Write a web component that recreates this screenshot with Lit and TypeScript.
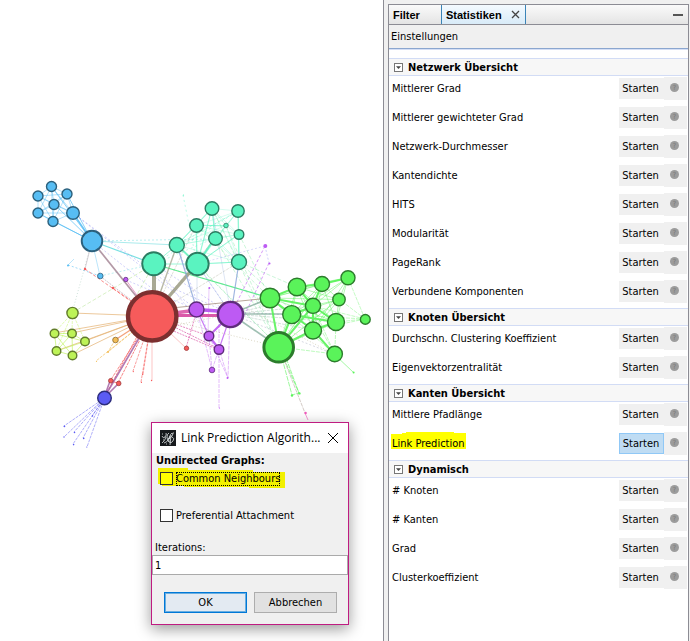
import { LitElement, html, svg, css } from "lit";
import { customElement } from "lit/decorators.js";
import { classMap } from "lit/directives/class-map.js";

type Pt = [number, number, number];

interface Group {
  fill: string;
  stroke: string;
  nodes: Pt[];
}

const groups: Record<string, Group> = {
  sky: {
    fill: "#57bdf3", stroke: "#2c607c",
    nodes: [[38, 196, 5], [51.5, 186.5, 5], [67, 194, 5], [54, 204.5, 5], [38, 213, 5], [53, 221.5, 5],
      [73, 213, 6.3], [92, 241, 10.3], [100.3, 276, 2.8], [68, 265.5, 1]],
  },
  teal: {
    fill: "#5af3c0", stroke: "#2c7c62",
    nodes: [[153.7, 263.7, 11.5], [176.8, 245, 7.5], [197.5, 264, 11.2], [196.5, 225.5, 6.8], [212, 208.5, 6.8],
      [238, 211, 6.2], [226, 225.5, 2.3], [239, 234.5, 4.8], [215.5, 238.5, 6.8], [239, 262, 7.5], [183.5, 195, 0.6]],
  },
  lime: {
    fill: "#bdf357", stroke: "#627c2c",
    nodes: [[72.5, 313, 5.6], [54.5, 333.5, 4.3], [72, 333.5, 4.3], [85, 341.5, 4.3], [56.5, 351, 4.3], [72.5, 355.5, 4.3]],
  },
  orange: {
    fill: "#f3bd57", stroke: "#8c6a2c",
    nodes: [[115.5, 340, 2.8], [108, 352, 1], [96.5, 361.5, 0.6]],
  },
  violet: {
    fill: "#bd5af3", stroke: "#5f2c7c",
    nodes: [[196.5, 309.5, 7.5], [230.5, 314.5, 12.6], [209, 336, 4.8], [219, 349.5, 4.8], [212, 370, 2.8],
      [227.5, 378, 1], [219.5, 408, 0.6], [265.3, 246, 2], [269.5, 263.5, 1], [209.3, 288, 1], [125.8, 279.5, 2.2]],
  },
  red: {
    fill: "#f65b5b", stroke: "#a03c3c",
    nodes: [[186.5, 348.3, 2.2], [85, 269, 1.2], [113, 288, 1.2], [110.8, 380.7, 2.3], [118.7, 383.4, 2.3],
      [133.3, 371.6, 0.7], [142.7, 374.4, 0.7], [141.4, 382.4, 0.6], [151.6, 380.5, 0.7]],
  },
  indigo: {
    fill: "#5b5bf3", stroke: "#2c2c7c",
    nodes: [[104.5, 398, 6.8], [64.4, 426.3, 0.9], [64, 437, 0.7], [74.5, 432.5, 0.8], [73.6, 444.6, 0.8],
      [83.7, 438.4, 0.8], [86.8, 447, 0.6], [92.5, 416, 0.8]],
  },
  green: {
    fill: "#5af35a", stroke: "#2c7c2c",
    nodes: [[270, 298, 9.8], [297, 287, 8.8], [322, 284, 7.5], [348, 277.7, 7], [339, 299.5, 6.2], [313, 305.8, 7.6],
      [291.7, 314.6, 9], [336, 322, 8.5], [313, 330.5, 8.5], [365.3, 319.4, 4.9], [278.7, 347.3, 14.8], [334.7, 354, 7.7],
      [353.6, 372.4, 1], [292, 395.5, 1.2], [299.4, 393.4, 1.2]],
  },
  pink: { fill: "#f35abd", stroke: "#b8408c", nodes: [[305.6, 413, 1.2]] },
};

/* stroke colour, width, opacity, dash pattern, path */
type Edge = [string, number, number, string, string];

const mesh = (name: string, from: number, to: number): string => {
  const ns = groups[name].nodes.slice(from, to);
  let d = "";
  ns.forEach((a, i) => ns.slice(i + 1).forEach((b) => {
    d += `M${a[0]} ${a[1]}L${b[0]} ${b[1]}`;
  }));
  return d;
};

const star = (x: number, y: number, ends: number[][]): string =>
  ends.map(([ex, ey]) => `M${x} ${y}L${ex} ${ey}`).join("");

const edges: Edge[] = [
  ["#57bdf3", 0.9, 0.5, "", mesh("sky", 0, 7)],
  ["#57bdf3", 1, 0.7, "", star(92, 241, [[53, 221], [73, 213], [54, 204], [67, 194], [51, 186], [38, 213]])],
  ["#57bdf3", 1.6, 0.7, "", "M92 241L73 213"],
  ["#57bdf3", 0.8, 0.5, "", "M92 241L100 276M68 265L74 259"],
  ["#57bdf3", 0.8, 0.7, "2 2", "M68 265L100 276"],
  ["#57d8da", 1.2, 0.8, "", "M92 241L154 264"],
  ["#57d8da", 1, 0.5, "", "M92 241L177 245"],
  ["#57d8da", 0.8, 0.5, "2 2", "M92 241L215 239M100 276L154 264"],
  ["#8a8af3", 0.8, 0.5, "2 2", "M73 213L197 310M73 213L177 290L231 314M92 241L154 290M177 245L209 336M126 280L197 310M197 264L231 314M154 264L231 314"],
  ["#8ab8a4", 0.8, 0.5, "1 2", "M92 241L72 313"],
  ["#9a8a9a", 0.8, 0.5, "", "M92 241L85 269"],
  ["#f65b5b", 0.9, 0.8, "3 2", "M85 269L152 316M113 288L152 316"],
  ["#9a8a9a", 0.8, 0.6, "2 1", "M100 276L152 316"],
  ["#a08090", 1.7, 0.8, "", "M92 241L152 316"],
  ["#d860a8", 1, 0.6, "", "M126 280L152 316"],
  ["#a8e080", 0.9, 0.5, "4 2", "M72 313L154 264M154 264L125 316"],
  ["#5af3c0", 0.8, 0.32, "", mesh("teal", 1, 10)],
  ["#5af3c0", 1, 0.6, "", "M154 264L177 245M154 264L197 264L239 262M197 264L196 225L212 208L215 238ZM177 245L196 225L226 226M197 264L239 234M212 208L197 264M238 211L239 262"],
  ["#5af3c0", 2, 0.8, "", "M177 245L197 264L215 238"],
  ["#5af3c0", 0.8, 0.5, "2 3", "M183 195L197 264M154 264L238 211M154 264L215 238M238 211L177 245M154 264L270 298"],
  ["#80e8a0", 0.8, 0.5, "4 2", "M197 264L279 347M239 234L270 298M215 238L279 347M239 262L297 287M212 208L279 347M226 226L279 347M177 245L279 347M239 262L313 330M196 225L270 298"],
  ["#5ae88a", 1.3, 0.95, "", "M154 264L270 298"],
  ["#a0a088", 4, 0.9, "", "M154 264V316"],
  ["#a0a088", 3.4, 0.9, "", "M197 264L152 316"],
  ["#a0a088", 1.4, 0.75, "", "M177 245L152 316"],
  ["#a0a088", 0.8, 0.4, "3 1", "M196 225L152 316M215 238L152 316M239 262L152 316"],
  ["#88a4d8", 1.2, 0.8, "", "M239 262L231 314M177 245L197 310"],
  ["#88a4d8", 0.8, 0.35, "", "M197 264V310M197 264L231 314M212 208L231 314"],
  ["#8a8af3", 0.8, 0.4, "2 2", "M197 264L265 246M154 264L209 336"],
  ["#bd5af3", 1, 0.6, "3 2", "M265 246L231 314M269 263L240 325"],
  ["#8a8af3", 0.8, 0.5, "2 2", "M265 246L269 263"],
  ["#bd5af3", 0.8, 0.4, "", "M209 288L208 336"],
  ["#e4b070", 1, 0.7, "", star(152, 316, [[72, 313], [54, 333], [72, 333], [85, 341], [56, 351], [72, 355]])],
  ["#bdf357", 0.9, 0.7, "", mesh("lime", 1, 6)],
  ["#bdf357", 0.8, 0.55, "3 1", star(72.5, 313, [[54, 333], [72, 333], [85, 341], [56, 351]])],
  ["#f08c5a", 1.4, 0.8, "", "M152 316L115 340"],
  ["#f3bd57", 0.9, 0.7, "3 1", "M152 316L108 352M115 340L108 352M152 316L96 361"],
  ["#f65b5b", 0.9, 0.65, "3 1", "M152 316L133 371M152 316L143 374M152 316L141 382"],
  ["#f65b5b", 0.9, 0.4, "", "M152 316V380M152 316L186 348"],
  ["#f65b5b", 1, 0.75, "3 1", "M152 316L110 381M152 316L118 383M148 316L104 398"],
  ["#f65b5b", 1, 0.8, "", "M110 381L118 383"],
  ["#a05aa0", 1.6, 0.8, "", "M152 316L104 398M110 381L104 398L119 383"],
  ["#5b5bf3", 0.9, 0.55, "3 1", star(104.5, 398, [[64, 426], [64, 437], [74, 432], [73, 444], [83, 438], [87, 447], [92, 416]])],
  ["#da58a8", 3, 1, "", "M152 315.500L231 315.500"],
  ["#a89080", 1, 0.8, "", "M152 310L270 298"],
  ["#da58a8", 3.4, 0.9, "", "M152 316L197 310"],
  ["#bd5af3", 3.6, 1, "", "M197 309.500L231 312"],
  ["#da58a8", 1, 0.7, "2 1", "M152 316L209 336M152 316L219 349M152 322L219 350M197 310L186 348"],
  ["#bd5af3", 2.2, 0.9, "", "M231 314L209 336L219 349"],
  ["#bd5af3", 1.2, 0.8, "", "M197 310L209 336M231 314L219 349"],
  ["#bd5af3", 0.9, 0.45, "4 1", "M197 310L212 370M209 336L212 370L219 349L228 378L230 314M219 314V408M209 336L228 378"],
  ["#b0a880", 0.8, 0.6, "1 2", "M152 316L279 347M231 314L152 330M230 300L334 354"],
  ["#88b0a0", 1.6, 0.8, "", "M231 314L270 298M231 314H292M231 314L279 347"],
  ["#88b0a0", 0.8, 0.45, "3 1", "M231 314L297 287M231 314L313 306M231 314L336 322M231 314L313 330M231 314L270 305"],
  ["#8088a8", 0.8, 0.4, "2 2", "M231 314L334 354M197 310L292 315"],
  ["#5af35a", 0.9, 0.5, "", mesh("green", 0, 9)],
  ["#5af35a", 0.8, 0.45, "4 1", star(365, 319, [[348, 278], [313, 306], [336, 322], [292, 315], [313, 330], [339, 299]])],
  ["#5af35a", 0.8, 0.5, "4 1", star(334.7, 354, [[279, 347], [297, 287], [313, 306], [336, 322], [313, 330], [270, 298]])],
  ["#5af35a", 2, 0.9, "", "M270 298L297 287L322 284L348 278M270 298L313 306L297 287M270 298L292 315L313 306L322 284M292 315L336 322L313 330L279 347L292 315M270 298L279 347M313 306L336 322M313 330L334 354M270 298L313 330L313 306M279 347L313 306"],
  ["#5af35a", 1, 0.55, "", "M279 347L336 322M279 347L297 287M279 347L339 299M279 347L322 284M334 354L353 372"],
  ["#5af35a", 1, 0.6, "5 1", "M279 347L292 395M279 347L299 393L292 395M282 347L299 393"],
  ["#b8a8a0", 1, 0.6, "4 1", "M279 347L305 413"],
  ["#f35abd", 1, 0.6, "", "M305 413L308 420"],
];

const strokeFor = (r: number) => (r > 14 ? 3 : r > 12 ? 2.4 : r > 9.9 ? 1.9 : r > 4 ? 1.4 : r > 2 ? 0.8 : 0);

@customElement("network-graph")
export class NetworkGraph extends LitElement {
  static styles = css`
    :host { display: block; }
    svg { display: block; width: 100%; height: auto; }
  `;

  render() {
    return html`
      <svg viewBox="0 0 383 480" role="img" aria-label="Netzwerkgraph">
        ${edges.map(([c, w, o, dash, d]) => svg`
          <path d=${d} fill="none" stroke=${c} stroke-width=${w} stroke-opacity=${o} stroke-dasharray=${dash || "none"}></path>`)}
        ${Object.values(groups).map((g) => g.nodes.map(([x, y, r]) => svg`
          <circle cx=${x} cy=${y} r=${r} fill=${g.fill} stroke=${g.stroke} stroke-width=${strokeFor(r)}></circle>`))}
        <circle cx="152.2" cy="316.3" r="24.2" fill="#f65b5b" stroke="#7c2f2f" stroke-width="4.4"></circle>
      </svg>
    `;
  }
}

const sections = [
  {
    title: "Netzwerk Übersicht",
    items: ["Mittlerer Grad", "Mittlerer gewichteter Grad", "Netzwerk-Durchmesser", "Kantendichte", "HITS",
      "Modularität", "PageRank", "Verbundene Komponenten"],
  },
  { title: "Knoten Übersicht", items: ["Durchschn. Clustering Koeffizient", "Eigenvektorzentralität"] },
  { title: "Kanten Übersicht", items: ["Mittlere Pfadlänge", "Link Prediction"] },
  { title: "Dynamisch", items: ["# Knoten", "# Kanten", "Grad", "Clusterkoeffizient"] },
];

@customElement("statistics-panel")
export class StatisticsPanel extends LitElement {
  static styles = css`
    :host {
      display: flex;
      box-sizing: border-box;
      padding: 4px 1px 0 4px;
      border-left: 1px solid #8c8c94;
      background: #f0f0f0;
    }
    * { box-sizing: border-box; }
    button { font: inherit; color: inherit; border: 0; padding: 0; margin: 0; }
    .panel {
      flex: 1;
      display: flex;
      flex-direction: column;
      border: 1px solid #8c8c94;
      border-bottom: 0;
      background: #fff;
    }
    .tabs {
      display: flex;
      height: 20px;
      border-bottom: 1px solid #8c8c94;
      background: linear-gradient(#fafafa, #e4e4e4);
    }
    .tab {
      display: flex;
      align-items: center;
      gap: 9px;
      padding: 0 4px;
      background: none;
      font: bold 11px/16px "Liberation Sans", Arial, sans-serif;
    }
    .tab.first { width: 52px; }
    .tab.active {
      padding: 0 5px 0 4px;
      border: solid #3a84b8;
      border-width: 0 1px;
      background: linear-gradient(#f4faff, #d8ebf8);
    }
    .min { margin-left: auto; padding: 0 5px; background: none; }
    .min svg, .tab svg { display: block; }
    .settings {
      height: 24px;
      padding: 0 2px;
      background: #f0f0f0;
      border-bottom: 1px solid #8ba6cf;
      text-align: left;
    }
    .gap { height: 9px; border-top: 1px solid #d5dff5; }
    h2 {
      display: flex;
      height: 18px;
      margin: 0;
      border: solid #d2dcf5;
      border-width: 1px 0;
      background: #f7f7f7;
      font-size: 11px;
      font-weight: bold;
    }
    .fold { display: flex; align-items: center; gap: 5px; padding: 0 5px; background: none; }
    ul { list-style: none; margin: 0; padding: 0; }
    li { display: flex; height: 29px; padding: 1px 1px 0 3px; }
    .name { flex: 1; line-height: 23px; }
    .mark { display: inline-block; position: relative; z-index: 0; }
    .mark svg { position: absolute; left: -1px; top: 0; z-index: -1; }
    .start { width: 45px; height: 21px; margin-top: 1px; padding-right: 2px; background: #f0f0f0; }
    .start.on { padding-right: 1px; background: #bfdcf3; border: 1px solid #90c8f6; }
    .help { display: flex; align-items: center; justify-content: center; width: 23px; height: 23px; padding: 0 2px 2px 0; background: #f0f0f0; }
  `;

  render() {
    return html`
      <div class="panel">
        <div class="tabs" role="tablist">
          <button class="tab first" role="tab">Filter</button>
          <button class="tab active" role="tab" aria-selected="true">
            Statistiken
            <svg width="9" height="9" viewBox="0 0 9 9" stroke="#444" stroke-width="1.3"><path d="M1 1L8 8M8 1L1 8"></path></svg>
          </button>
          <button class="min" aria-label="Minimieren">
            <svg width="10" height="2" viewBox="0 0 10 2"><rect width="10" height="2" fill="#555"></rect></svg>
          </button>
        </div>
        <button class="settings">Einstellungen</button>
        <div class="gap"></div>
        ${sections.map((s) => html`
          <section>
            <h2>
              <button class="fold" aria-expanded="true">
                <svg width="9" height="9" viewBox="0 0 9 9">
                  <rect x=".5" y=".5" width="8" height="8" fill="#fff" stroke="#777"></rect>
                  <path d="M2 3.3h5L4.5 6z" fill="#444"></path>
                </svg>
                ${s.title}
              </button>
            </h2>
            <ul>
              ${s.items.map((name) => {
                const on = name === "Link Prediction";
                return html`
                  <li>
                    <div class="name">
                      ${on
                        ? html`<span class="mark"><svg width="76" height="18" viewBox="0 0 76 18"><path d="M0 2H11V1H15V0H63V1H75V17H0z" fill="#ff0"></path></svg>${name}</span>`
                        : name}
                    </div>
                    <button class=${classMap({ start: true, on })}>Starten</button>
                    <button class="help" aria-label="Hilfe">
                      <svg width="9" height="9" viewBox="0 0 9 9">
                        <circle cx="4.5" cy="4.5" r="4.5" fill="#9c9c9c"></circle>
                        <text x="4.5" y="7" text-anchor="middle" font-size="7" fill="#777">?</text>
                      </svg>
                    </button>
                  </li>`;
              })}
            </ul>
          </section>`)}
      </div>
    `;
  }
}

@customElement("prediction-dialog")
export class PredictionDialog extends LitElement {
  static styles = css`
    :host {
      display: block;
      box-sizing: border-box;
      width: 198px;
      border: 1px solid #bf1c81;
      background: #f0f0f0;
      box-shadow: 0 4px 14px rgba(0, 0, 0, 0.4);
    }
    * { box-sizing: border-box; }
    header {
      display: flex;
      align-items: center;
      height: 30px;
      padding: 0 10px 0 8px;
      background: #fff;
      font: 12px/16px "Open Sans", "Noto Sans", sans-serif;
    }
    .title { flex: 1; padding-left: 5px; white-space: nowrap; }
    button { font: inherit; color: inherit; padding: 0; }
    .close { border: 0; background: none; display: flex; }
    .heading { margin: 0; padding: 0 4px; line-height: 15px; font-size: 11px; font-weight: bold; }
    .check {
      position: relative;
      z-index: 0;
      display: flex;
      align-items: center;
      gap: 3px;
      height: 21px;
      padding-left: 8px;
    }
    .check svg { position: absolute; left: 6px; top: 0; z-index: -1; }
    .check + .check { margin-top: 16px; }
    .check input { appearance: none; width: 13px; height: 13px; margin: 0; border: 1px solid #333; background: #fff; }
    .check.focus input { background: #ff0; }
    .check span { line-height: 14px; }
    .check.focus span { outline: 1px dotted #000; outline-offset: -1px; }
    .field { display: block; margin-top: 14px; padding: 0 3px; line-height: 15px; }
    .value {
      display: block;
      width: 100%;
      height: 20px;
      padding: 0 2px;
      border: 1px solid #aaa;
      background: #fff;
      font: inherit;
    }
    footer { display: flex; gap: 7px; padding: 17px 11px 11px 12px; }
    footer button { flex: 1; height: 21px; border: 1px solid #adadad; background: #e1e1e1; }
    footer .ok { border: 1px solid #0078d7; box-shadow: inset 0 0 0 1px #6aaee0; background: #e3eaf2; }
  `;

  render() {
    return html`
      <header>
        <svg width="16" height="16" viewBox="0 0 16 16">
          <rect width="16" height="16" fill="#16191c"></rect>
          <g fill="none" stroke="#e0e4e6" stroke-width=".8">
            <path d="M2 6q1 3 3 1t1-4M6 7q-1 4-4 6M4 13q3 0 5-5t3-5q2 0 0 3t-4 3M9 3q-2 1-2 4t2 5M12 7q3 1 1 4t-4 1q-1-2 1-6M11 5l-1 10"></path>
            <path d="M2 4h1M3 10h1M13 3h1M6 14h1" stroke-dasharray="1 1"></path>
          </g>
        </svg>
        <span class="title">Link Prediction Algorith...</span>
        <button class="close" aria-label="Schließen">
          <svg width="10" height="10" viewBox="0 0 10 10" stroke="#000"><path d="M0 0L10 10M10 0L0 10"></path></svg>
        </button>
      </header>
      <p class="heading">Undirected Graphs:</p>
      <label class="check focus">
        <svg width="128" height="21" viewBox="0 0 128 21"><path d="M0 0H30V2H95V4H127V20H91V19H26V18H4V16H0z" fill="#f2f000"></path></svg>
        <input type="checkbox"><span>Common Neighbours</span>
      </label>
      <label class="check"><input type="checkbox"><span>Preferential Attachment</span></label>
      <label class="field" for="iterations">Iterations:</label>
      <input class="value" id="iterations" type="text" value="1">
      <footer>
        <button class="ok">OK</button>
        <button>Abbrechen</button>
      </footer>
    `;
  }
}

@customElement("app-root")
export class AppRoot extends LitElement {
  static styles = css`
    :host {
      display: grid;
      grid-template-columns: minmax(0, 1fr) 307px;
      min-height: 100vh;
      background: #fff;
      color: #000;
      font: 11px/15px "DejaVu Sans Condensed", "DejaVu Sans", sans-serif;
    }
    .canvas { position: relative; overflow: hidden; }
    prediction-dialog { position: absolute; left: 151px; top: 422px; }
  `;

  render() {
    return html`
      <main class="canvas">
        <network-graph></network-graph>
        <prediction-dialog></prediction-dialog>
      </main>
      <statistics-panel></statistics-panel>
    `;
  }
}
